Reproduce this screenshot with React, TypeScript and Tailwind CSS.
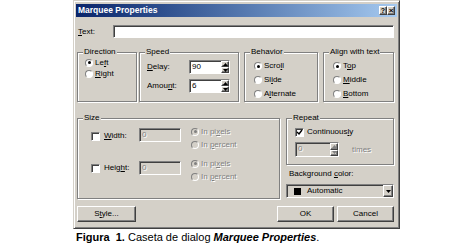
import React from "react";

const sunken =
  "border border-t-[#808080] border-l-[#808080] border-r-white border-b-white shadow-[inset_1px_1px_0_#404040]";
const raised =
  "border border-t-white border-l-white border-r-[#404040] border-b-[#404040] shadow-[inset_-1px_-1px_0_#808080]";
const grayText = "text-[#808080] [text-shadow:1px_1px_0_#fff]";
const group =
  "border border-[#808080] shadow-[inset_1px_1px_0_#fff,1px_1px_0_#fff]";

function Key({ text, at = -1 }: { text: string; at?: number }) {
  if (at < 0) return <>{text}</>;
  return (
    <>
      {text.slice(0, at)}
      <span className="underline">{text[at]}</span>
      {text.slice(at + 1)}
    </>
  );
}

function Legend({ children }: { children: React.ReactNode }) {
  return <legend className="ml-[5px] px-[1px] leading-[10px] bg-[#d4d0c8]">{children}</legend>;
}

function Radio({
  label,
  at = -1,
  checked = false,
  disabled = false,
}: {
  label: string;
  at?: number;
  checked?: boolean;
  disabled?: boolean;
}) {
  return (
    <div className="flex items-center gap-[2px]">
      <span
        className={`w-[8px] h-[8px] rounded-full border border-t-[#808080] border-l-[#808080] border-r-white border-b-white flex items-center justify-center ${
          disabled ? "bg-[#d4d0c8]" : "bg-white"
        }`}
      >
        {checked && (
          <span className={`w-[3px] h-[3px] rounded-full ${disabled ? "bg-[#808080]" : "bg-black"}`} />
        )}
      </span>
      <span className={disabled ? grayText : ""}>
        <Key text={label} at={at} />
      </span>
    </div>
  );
}

function Check({ checked = false }: { checked?: boolean }) {
  return (
    <span className={`${sunken} w-[9px] h-[9px] bg-white flex items-center justify-center shrink-0`}>
      {checked && (
        <svg width="7" height="7" viewBox="0 0 7 7">
          <path d="M1 3 L3 5 L6 1" stroke="#000" strokeWidth="1.4" fill="none" />
        </svg>
      )}
    </span>
  );
}

function Arrow({ down = false, color = "#000" }: { down?: boolean; color?: string }) {
  return (
    <svg width="5" height="3" viewBox="0 0 5 3">
      <path d={down ? "M0 0 H5 L2.5 3 Z" : "M0 3 H5 L2.5 0 Z"} fill={color} />
    </svg>
  );
}

function Spin({
  value,
  disabled = false,
  w = "w-[41px]",
  h = "h-[14px]",
}: {
  value: string;
  disabled?: boolean;
  w?: string;
  h?: string;
}) {
  const c = disabled ? "#808080" : "#000";
  return (
    <div className={`${sunken} ${w} ${h} flex ${disabled ? "bg-[#d4d0c8]" : "bg-white"}`}>
      <span className={`flex-1 pl-[2px] pt-[1px] leading-[10px] ${disabled ? grayText : ""}`}>{value}</span>
      <div className="flex flex-col w-[8px]">
        <div className={`${raised} flex-1 bg-[#d4d0c8] flex items-center justify-center`}>
          <Arrow color={c} />
        </div>
        <div className={`${raised} flex-1 bg-[#d4d0c8] flex items-center justify-center`}>
          <Arrow down color={c} />
        </div>
      </div>
    </div>
  );
}

function Button({ label, w }: { label: React.ReactNode; w: string }) {
  return (
    <div className={`${raised} ${w} h-[16px] bg-[#d4d0c8] flex items-center justify-center`}>{label}</div>
  );
}

export default function App() {
  return (
    <div className="w-[472px] h-[251px] bg-white font-['Liberation_Sans',Arial,sans-serif] text-[8px] text-black overflow-hidden">
      <div className="ml-[73px] w-[327px] h-[229px] bg-[#d4d0c8] border border-t-[#d4d0c8] border-l-[#d4d0c8] border-r-[#404040] border-b-[#404040] shadow-[inset_1px_1px_0_#fff,inset_-1px_-1px_0_#808080] pt-[3px] px-[2px] flex flex-col">
        <div className="h-[13px] flex items-center bg-linear-to-r from-[#0a246a] to-[#a6caf0] pl-[2px] pr-[2px]">
          <span className="flex-1 text-white font-bold text-[8.5px] leading-[13px]">Marquee Properties</span>
          <div className={`${raised} w-[8px] h-[9px] bg-[#d4d0c8] flex items-center justify-center text-[7px] font-bold leading-none`}>
            ?
          </div>
          <div className={`${raised} w-[8px] h-[9px] bg-[#d4d0c8] flex items-center justify-center text-[8px] font-bold leading-none`}>
            ×
          </div>
        </div>

        <div className="pl-[1px] pr-[3px] flex flex-col">
          <div className="mt-[8px] flex items-center h-[13px]">
            <span className="w-[36px] pl-[1px]">
              <Key text="Text:" at={0} />
            </span>
            <div className={`${sunken} bg-white flex-1 h-[13px]`} />
          </div>

          <div className="mt-[9px] flex h-[55px]">
            <fieldset className={`${group} w-[60px]`}>
              <Legend>Direction</Legend>
              <div className="pl-[7px] flex flex-col leading-[11px]">
                <Radio label="Left" at={2} checked />
                <Radio label="Right" at={0} />
              </div>
            </fieldset>
            <fieldset className={`${group} ml-[2px] w-[100px]`}>
              <Legend>Speed</Legend>
              <div className="pl-[7px] pt-[3px] flex flex-col gap-[5px]">
                <div className="flex items-center">
                  <span className="w-[42px]">
                    <Key text="Delay:" at={0} />
                  </span>
                  <Spin value="90" />
                </div>
                <div className="flex items-center">
                  <span className="w-[42px]">
                    <Key text="Amount:" at={4} />
                  </span>
                  <Spin value="6" />
                </div>
              </div>
            </fieldset>
            <fieldset className={`${group} ml-[5px] w-[74px]`}>
              <Legend>Behavior</Legend>
              <div className="pl-[9px] pt-[2px] flex flex-col leading-[14px]">
                <Radio label="Scroll" at={4} checked />
                <Radio label="Slide" at={2} />
                <Radio label="Alternate" at={1} />
              </div>
            </fieldset>
            <fieldset className={`${group} ml-[5px] w-[71px]`}>
              <Legend>Align with text</Legend>
              <div className="pl-[9px] pt-[2px] flex flex-col leading-[14px]">
                <Radio label="Top" at={1} checked />
                <Radio label="Middle" at={0} />
                <Radio label="Bottom" at={0} />
              </div>
            </fieldset>
          </div>

          <div className="mt-[11px] flex">
            <fieldset className={`${group} w-[203px] h-[86px]`}>
              <Legend>Size</Legend>
              <div className="pl-[13px] flex flex-col">
                <div className="flex items-start pt-[2px]">
                  <div className="flex items-center gap-[4px] w-[48px] mt-[5px]">
                    <Check />
                    <span>
                      <Key text="Width:" at={0} />
                    </span>
                  </div>
                  <div className={`${sunken} w-[42px] h-[14px] mt-[3px] bg-[#d4d0c8] pl-[2px] pt-[1px] leading-[10px]`}>
                    <span className={grayText}>0</span>
                  </div>
                  <div className="ml-[10px] flex flex-col leading-[13px]">
                    <Radio label="In pixels" at={5} checked disabled />
                    <Radio label="In percent" at={3} disabled />
                  </div>
                </div>
                <div className="flex items-start mt-[6px]">
                  <div className="flex items-center gap-[4px] w-[48px] mt-[5px]">
                    <Check />
                    <span>
                      <Key text="Height:" at={4} />
                    </span>
                  </div>
                  <div className={`${sunken} w-[42px] h-[14px] mt-[4px] bg-[#d4d0c8] pl-[2px] pt-[1px] leading-[10px]`}>
                    <span className={grayText}>0</span>
                  </div>
                  <div className="ml-[10px] flex flex-col leading-[13px]">
                    <Radio label="In pixels" at={5} checked disabled />
                    <Radio label="In percent" at={3} disabled />
                  </div>
                </div>
              </div>
            </fieldset>

            <div className="ml-[6px] flex-1 flex flex-col">
              <fieldset className={`${group} h-[52px]`}>
                <Legend>Repeat</Legend>
                <div className="pl-[8px] pt-[4px] flex flex-col">
                  <div className="flex items-center gap-[3px] leading-[10px]">
                    <Check checked />
                    <span>
                      <Key text="Continuously" at={10} />
                    </span>
                  </div>
                  <div className="flex items-center mt-[5px]">
                    <Spin value="0" disabled w="w-[44px]" h="h-[15px]" />
                    <span className={`ml-[13px] ${grayText}`}>times</span>
                  </div>
                </div>
              </fieldset>
              <span className="mt-[4px] pl-[3px] leading-[10px]">
                <Key text="Background color:" at={11} />
              </span>
              <div className={`${sunken} mt-[5px] h-[14px] bg-[#d4d0c8] flex items-center`}>
                <span className="ml-[7px] w-[7px] h-[7px] bg-black" />
                <span className="ml-[6px] flex-1">Automatic</span>
                <div className={`${raised} w-[10px] h-full bg-[#d4d0c8] flex items-center justify-center`}>
                  <Arrow down />
                </div>
              </div>
            </div>
          </div>

          <div className="mt-[7px] flex items-center">
            <Button w="w-[59px]" label={<Key text="Style..." at={1} />} />
            <div className="flex-1" />
            <Button w="w-[57px]" label="OK" />
            <div className="ml-[3px]">
              <Button w="w-[57px]" label="Cancel" />
            </div>
          </div>
        </div>
      </div>

      <p className="ml-[76px] mt-[1px] text-[11px] leading-[14px]">
        <b>Figura&nbsp; 1.</b> Caseta de dialog <b className="italic">Marquee Properties</b>.
      </p>
    </div>
  );
}
